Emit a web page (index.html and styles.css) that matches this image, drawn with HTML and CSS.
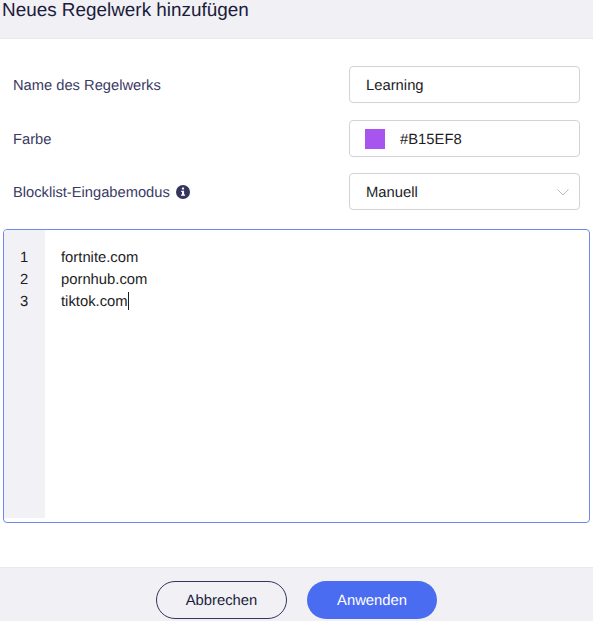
FILE: index.html
```html
<!DOCTYPE html>
<html lang="de">
<head>
    <meta charset="UTF-8">
    <title>Neues Regelwerk hinzufügen</title>
    <link rel="stylesheet" href="styles.css">
</head>
<body>
    <header class="dialog-header">Neues Regelwerk hinzufügen</header>

    <main class="dialog-body">
        <div class="form-row">
            <label>Name des Regelwerks</label>
            <div class="field">Learning</div>
        </div>
        <div class="form-row">
            <label>Farbe</label>
            <div class="field">
                <span class="swatch"></span>
                <span>#B15EF8</span>
            </div>
        </div>
        <div class="form-row">
            <label>
                Blocklist-Eingabemodus
                <svg class="info-icon" viewBox="0 0 14 14" width="14" height="14">
                    <circle cx="7" cy="7" r="7" fill="#33345f"/>
                    <rect x="5.9" y="2.6" width="2.2" height="2" rx="0.4" fill="#fff"/>
                    <path d="M5.2 5.8h2.9v3.7h1v1.3H5v-1.3h1V7.1h-.8z" fill="#fff"/>
                </svg>
            </label>
            <div class="field select-field">
                <span>Manuell</span>
                <svg class="chevron" viewBox="0 0 12 7" width="12" height="7">
                    <path d="M0.5 0.5L6 6l5.5-5.5" fill="none" stroke="#b9b9c4" stroke-width="1"/>
                </svg>
            </div>
        </div>

        <div class="editor">
            <div class="gutter">
                <div>1</div>
                <div>2</div>
                <div>3</div>
            </div>
            <div class="code">
                <div>fortnite.com</div>
                <div>pornhub.com</div>
                <div>tiktok.com<span class="cursor"></span></div>
            </div>
        </div>
    </main>

    <footer class="dialog-footer">
        <button class="btn btn-cancel">Abbrechen</button>
        <button class="btn btn-apply">Anwenden</button>
    </footer>
</body>
</html>
```
FILE: styles.css
```css
html, body {
    height: 100%;
}
body {
    margin: 0;
    height: 621px;
    overflow: hidden;
    display: flex;
    flex-direction: column;
    background-color: #fff;
    font-family: "Liberation Sans", Arial, sans-serif;
    color: #1b1b2f;
    text-rendering: geometricPrecision;
}
.dialog-header {
    height: 39px;
    box-sizing: border-box;
    padding: 0 0 0 2px;
    background-color: #f0f0f5;
    border-bottom: 1px solid #e8e8ee;
    font-size: 18.9px;
    line-height: 21px;
    color: #1c1c3a;
}
.dialog-body {
    flex: 1;
    padding: 27px 3px 0;
}
.form-row {
    display: flex;
    align-items: center;
    justify-content: space-between;
    height: 37px;
    margin-bottom: 17px;
    padding: 0 10px;
}
.form-row:nth-child(2) {
    margin-bottom: 16px;
}
.form-row:nth-child(3) {
    margin-bottom: 19px;
}
.form-row label {
    display: flex;
    align-items: center;
    gap: 6px;
    padding-top: 2px;
    font-size: 14.7px;
    color: #3a3b63;
}
.info-icon {
    margin-top: -2px;
}
.field {
    display: flex;
    align-items: center;
    box-sizing: border-box;
    width: 231px;
    height: 37px;
    padding: 2px 0 0 16px;
    background-color: #fff;
    border: 1px solid #d2d2da;
    border-radius: 4px;
    font-size: 14.8px;
    color: #1d1d1f;
}
.swatch {
    width: 20px;
    height: 20px;
    margin: -2px 15px 0 -1px;
    background-color: #a855f0;
}
.select-field {
    justify-content: space-between;
    padding-right: 10px;
}
.chevron {
    margin-top: -1px;
}
.editor {
    display: flex;
    box-sizing: border-box;
    width: 587px;
    height: 294px;
    border: 1px solid #7088ee;
    border-radius: 4px;
    overflow: hidden;
    font-size: 14.8px;
    line-height: 22px;
    color: #1d1d1f;
}
.gutter {
    width: 41px;
    height: 288px;
    box-sizing: border-box;
    padding: 17px 0 0 16px;
    background-color: #f1f1f6;
}
.code {
    padding: 17px 0 0 16px;
}
.cursor {
    display: inline-block;
    width: 1px;
    height: 18px;
    vertical-align: -4px;
    background-color: #1d1d1f;
}
.dialog-footer {
    display: flex;
    justify-content: center;
    gap: 20px;
    height: 54px;
    box-sizing: border-box;
    padding-top: 13px;
    background-color: #f0f0f5;
    border-top: 1px solid #e8e8ee;
}
.btn {
    width: 131px;
    height: 38px;
    padding: 1px 0 0;
    border-radius: 19px;
    font-family: inherit;
    font-size: 14.8px;
    text-rendering: geometricPrecision;
}
.btn-cancel {
    background-color: transparent;
    border: 1px solid #33345f;
    color: #1c1c3a;
}
.btn-apply {
    width: 130px;
    background-color: #4a6cf1;
    border: none;
    color: #fff;
}
```
